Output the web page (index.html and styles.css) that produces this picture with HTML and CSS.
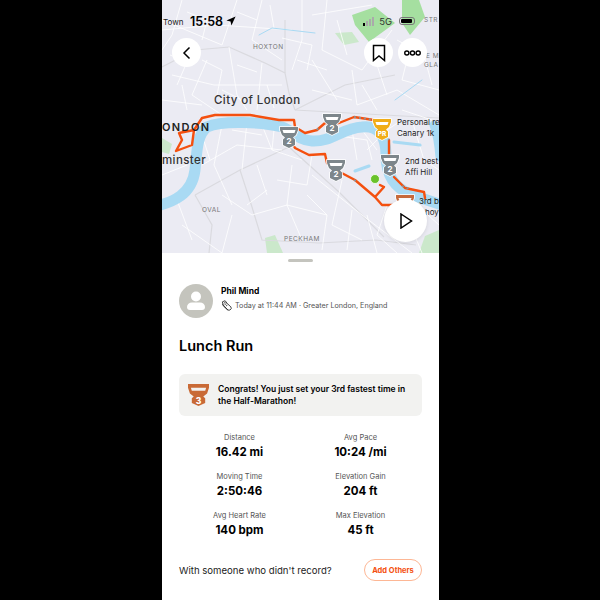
FILE: index.html
```html
<!DOCTYPE html>
<html lang="en">
  <head>
    <meta charset="UTF-8" />
    <meta name="viewport" content="width=device-width, initial-scale=1.0" />
    <title>Lunch Run</title>
    <link rel="stylesheet" href="styles.css">
  </head>
  <body>
    <div class="phone">
      <div class="map">
        <svg class="map-canvas" viewBox="0 0 277 253" width="277" height="253">
          <defs>
            <g id="medal">
              <path d="M0 0h18v3l-2 5-3 2.500 2 2v5.500L9 21l-6-3v-5.500l2-2L2 8 0 3z" fill="currentColor" stroke="#fff" stroke-width="1.500" paint-order="stroke" />
              <path d="M2.500 3h13l-1 3H3.500z" fill="#fff" />
            </g>
          </defs>

          <!-- parks -->
          <g class="park">
            <path d="M190 15 213 7l20 16-26 19-14-17z" />
            <path d="M240 0h17l6 17-15 18-8-12z" />
          </g>
          <g class="park-light">
            <path d="M173 33l17-1 7 10-15 3z" />
            <path d="M103 238l10-3 8 18h-16z" />
            <path d="M263 236l14-6v23h-20z" />
            <path d="M0 138l10 6-3 10-7-2z" />
          </g>

          <!-- grey main roads -->
          <g class="road-main">
            <path d="M0 67 33 50l34-3 36 16 20 10 4 20 6 17" />
            <path d="M133 110l50-25 50-10" />
            <path d="M33 195l45-25 49-23" />
            <path d="M78 170l12 37 10 33 57 3 57-3 40 5" />
            <path d="M33 195l17 30-3 28" />
            <path d="M127 147l50 45 45 45" />
            <path d="M123 73V20" />
            <path d="M133 110l144 8" />
          </g>

          <!-- white streets -->
          <g class="road">
            <path d="M0 20 60 45 75 0" />
            <path d="M20 0 10 35 0 50" />
            <path d="M100 0 90 40 120 60" />
            <path d="M140 0v40l-10 30" />
            <path d="M165 0l-5 50 40 20 30-40" />
            <path d="M190 70l5 35 40-15 42 25" />
            <path d="M45 60 30 95 60 115" />
            <path d="M67 47 75 95 85 110" />
            <path d="M10 75 52 85 120 85" />
            <path d="M0 100 40 105" />
            <path d="M100 63 95 110" />
            <path d="M150 60 175 100" />
            <path d="M210 50 225 95" />
            <path d="M250 40 240 80 277 90" />
            <path d="M0 30 55 25 130 30" />
            <path d="M150 15 210 5" />
            <path d="M60 125 52 165 70 205" />
            <path d="M85 122 80 170" />
            <path d="M100 125 110 150 140 160" />
            <path d="M40 165 75 145 120 150" />
            <path d="M60 195 90 215 125 205 165 215" />
            <path d="M130 165 125 205 140 240" />
            <path d="M180 180 170 225 200 240" />
            <path d="M205 215 215 253" />
            <path d="M150 175 200 215 250 253" />
            <path d="M20 225 60 253" />
            <path d="M170 135 205 140 210 160" />
            <path d="M190 130 195 160" />
            <path d="M240 205 260 253" />
            <path d="M25 12 45 20 40 40M75 12 95 20M108 5 112 28M120 38 150 45 145 70" />
            <path d="M8 55 25 62 15 85M40 60 60 70 55 95M75 65 95 72M105 85 112 108M135 60 165 70M175 20 185 55" />
            <path d="M20 85 25 110M60 90 80 100M200 85 215 110M235 40 262 55 270 85M150 90 190 100" />
            <path d="M40 135 48 160M70 130 100 135M112 130 110 150M150 155 145 185 115 180M95 165 105 195" />
            <path d="M205 150 225 130 240 120M200 130 215 150M250 120 262 160 277 170M240 110 270 120" />
            <path d="M0 175 25 165M15 200 30 240M70 215 60 253M105 190 85 205M145 195 165 215 160 250M190 210 185 250" />
            <path d="M225 205 215 235 235 253M255 205 277 225" />
          </g>

          <!-- river and docks -->
          <g class="water">
            <path class="river" d="M-5 206C10 202 30 195 33 170 35 150 35 135 45 127 60 120 100 122 120 127 130 130 135 140 150 141 170 142 180 128 200 127 215 125 224 135 224 155 224 175 232 188 250 195L280 205" />
            <path class="dock" d="M272 125c3 8 5 20 6 32" />
            <path class="canal" d="M97 35l13-7 43 5" />
            <path class="canal" d="M260 80l-27 20" />
            <path class="canal canal-wide" d="M232 142l26 3" />
            <path class="canal canal-wide" d="M193 171l14-5" />
          </g>

          <!-- route -->
          <g class="route">
            <path d="M14 151 20 140 17 133 32 130 30 145zM32 130 40 118 53 115 88 115 117 120 132 120 133 127 143 133 155 130 163 123 177 123 192 117 212 120" />
            <path d="M227 140V160M232 177 243 188 262 192 263 198" />
            <path d="M127 137 133 148 147 155 163 154 165 163 174 170 193 180 213 197 220 205 232 205M213 197 222 187 218 185" />
          </g>
          <g class="route-paused">
            <path d="M192 117 212 120M222 130 227 140M240 186 247 189M155 130 157 127M192 180 194 181" />
          </g>
          <circle class="start-dot" cx="213" cy="179" r="4.500" />

          <!-- medals -->
          <g class="medal-grey">
            <use href="#medal" x="118" y="127" />
            <use href="#medal" x="161" y="114" />
            <use href="#medal" x="165" y="160" />
            <use href="#medal" x="219" y="155" />
          </g>
          <use class="medal-gold" href="#medal" x="211" y="119" />
          <use class="medal-bronze" href="#medal" x="234" y="195" />
          <g class="medal-num">
            <text x="127" y="144">2</text>
            <text x="170" y="131">2</text>
            <text x="174" y="177">2</text>
            <text x="228" y="172">2</text>
          </g>
          <text class="medal-pr" x="220" y="136">PR</text>

          <!-- labels -->
          <text class="label" x="1" y="25">Town</text>
          <text class="label-small" x="91" y="49">HOXTON</text>
          <text class="label-city" x="52" y="104">City of London</text>
          <text class="label-bold" x="0" y="131">ONDON</text>
          <text class="label-city" x="0" y="164">minster</text>
          <text class="label-small" x="40" y="212">OVAL</text>
          <text class="label-small" x="122" y="241">PECKHAM</text>
          <text class="label-small" x="262" y="22">STR</text>
          <text class="label-small" x="264" y="58">E M</text>
          <text class="label-small" x="262" y="67">GLA</text>
          <text class="label" x="235" y="125">Personal re</text>
          <text class="label" x="235" y="136">Canary 1k</text>
          <text class="label" x="243" y="164">2nd best</text>
          <text class="label" x="243" y="175">Affi Hill</text>
          <text class="label" x="257" y="204">3rd b</text>
          <text class="label" x="263" y="215">hoy</text>
        </svg>

        <div class="status-bar">
          <div class="status-left">
            <span class="clock">15:58</span>
            <svg viewBox="0 0 12 12" width="10" height="10"><path d="M11.500.5 .5 5.500 5.500 6.500 6.500 11.500z" /></svg>
          </div>
          <div class="status-right">
            <span class="bars"><i></i><i></i><i></i><i></i></span>
            <span class="network">5G</span>
            <span class="battery"><b></b></span>
          </div>
        </div>

        <button class="map-btn back-btn" type="button">
          <svg viewBox="0 0 16 16" width="16" height="16"><path d="M10.500 2.500 5 8l5.500 5.500" /></svg>
        </button>
        <div class="top-actions">
          <button class="map-btn" type="button">
            <svg viewBox="0 0 16 18" width="16" height="18"><path d="M2.500 1.500h11v15L8 12l-5.500 4.500z" /></svg>
          </button>
          <button class="map-btn" type="button">
            <svg viewBox="0 0 18 8" width="17" height="8"><circle cx="3" cy="4" r="2.200" /><circle cx="9" cy="4" r="2.200" /><circle cx="15" cy="4" r="2.200" /></svg>
          </button>
        </div>
        <button class="map-btn play-btn" type="button">
          <svg viewBox="0 0 14 16" width="14" height="16"><path d="M2 1 12.500 8 2 15z" /></svg>
        </button>
      </div>

      <div class="sheet">
        <div class="handle"></div>

        <div class="athlete">
          <div class="avatar">
            <svg viewBox="0 0 34 34" width="34" height="34">
              <circle cx="17" cy="12.500" r="5" />
              <path d="M8 23a5 4.500 0 0 1 5-4.500h8a5 4.500 0 0 1 5 4.500 3 3 0 0 1-3 3H11a3 3 0 0 1-3-3z" />
            </svg>
          </div>
          <div>
            <div class="athlete-name">Phil Mind</div>
            <div class="athlete-meta">
              <svg viewBox="0 0 12 12" width="11" height="11"><path d="M1.500 2 4.500.8 7 4l3.800 3.500.4 2-1.500 1.500H7.500L2.500 6.500z" /><path d="M3 3.500l2-1M4 5l2-1M5.500 6.500l1.500-1M1.500 4.500 7.500 11" /></svg>
              <span>Today at 11:44 AM · Greater London, England</span>
            </div>
          </div>
        </div>

        <h1 class="title">Lunch Run</h1>

        <div class="callout">
          <svg class="callout-medal" viewBox="0 0 22 23" width="21" height="22">
            <path d="M0 0h22v4l-2 6-4 3 2 2v5l-7 3-7-3v-5l2-2-4-3-2-6z" />
            <path class="cut" d="M3 4h16l-1 3H4z" />
            <text x="11" y="20.500">3</text>
          </svg>
          <p>Congrats! You just set your 3rd fastest time in the Half-Marathon!</p>
        </div>

        <div class="stats">
          <div class="stat"><span>Distance</span><strong>16.42 mi</strong></div>
          <div class="stat"><span>Avg Pace</span><strong>10:24 /mi</strong></div>
          <div class="stat"><span>Moving Time</span><strong>2:50:46</strong></div>
          <div class="stat"><span>Elevation Gain</span><strong>204 ft</strong></div>
          <div class="stat"><span>Avg Heart Rate</span><strong>140 bpm</strong></div>
          <div class="stat"><span>Max Elevation</span><strong>45 ft</strong></div>
        </div>

        <div class="others">
          <span>With someone who didn't record?</span>
          <button class="others-btn" type="button">Add Others</button>
        </div>
      </div>
    </div>
  </body>
</html>
```

FILE: styles.css
```css
* {
  margin: 0;
  padding: 0;
  box-sizing: border-box;
}

body {
  background: #000;
  font-family: "Inter", "Liberation Sans", sans-serif;
  color: #000;
}

.phone {
  width: 277px;
  height: 600px;
  margin-left: 162px;
  background: #fff;
  overflow: hidden;
}

/* Map Section */
.map {
  position: relative;
  height: 253px;
  background: #ebebf3;
}

.map-canvas {
  display: block;
}

.park path {
  fill: #a5dfa0;
}

.park-light path {
  fill: #cbe8cb;
}

.road-main path {
  fill: none;
  stroke: #dadadf;
  stroke-width: 1.200;
}

.road path {
  fill: none;
  stroke: #fff;
  stroke-width: 0.800;
}

.water path {
  fill: none;
  stroke: #a9daf3;
  stroke-linecap: round;
}

.water .river {
  stroke-width: 11;
}

.water .dock {
  stroke-width: 9;
}

.water .canal {
  stroke-width: 1;
}

.water .canal-wide {
  stroke-width: 3;
}

.route path {
  fill: none;
  stroke: #f4500f;
  stroke-width: 2.400;
  stroke-linejoin: round;
  stroke-linecap: round;
}

.route-paused path {
  fill: none;
  stroke: #8d9296;
  stroke-width: 1.800;
  stroke-dasharray: 2 3;
}

.start-dot {
  fill: #69c22a;
  stroke: #fff;
  stroke-width: 0.800;
}

.medal-grey {
  color: #7d868b;
}

.medal-gold {
  color: #f0ad18;
}

.medal-bronze {
  color: #c76a3b;
}

.medal-num text {
  fill: #fff;
  font-size: 8px;
  font-weight: 700;
  text-anchor: middle;
}

.medal-pr {
  fill: #fff;
  font-size: 6.500px;
  font-weight: 800;
  text-anchor: middle;
}

.label {
  fill: #222;
  font-size: 8px;
}

.label-small {
  fill: #777;
  font-size: 6.500px;
  letter-spacing: 0.5px;
}

.label-city {
  fill: #333;
  font-size: 11.500px;
  font-weight: 500;
  letter-spacing: 0.4px;
}

.label-bold {
  fill: #222;
  font-size: 11px;
  font-weight: 600;
  letter-spacing: 1.400px;
}

/* Status bar */
.status-bar {
  position: absolute;
  top: 14px;
  left: 28px;
  right: 24px;
  display: flex;
  justify-content: space-between;
  align-items: center;
  height: 14px;
}

.status-left {
  display: flex;
  align-items: center;
  gap: 3px;
}

.clock {
  font-size: 12.500px;
  font-weight: 600;
}

.status-right {
  display: flex;
  align-items: center;
  gap: 5px;
}

.bars {
  display: flex;
  align-items: flex-end;
  gap: 1px;
  height: 9px;
}

.bars i {
  display: block;
  width: 2px;
  background: #aaa;
}

.bars i:nth-child(1) {
  height: 3px;
  background: #000;
}

.bars i:nth-child(2) {
  height: 5px;
}

.bars i:nth-child(3) {
  height: 7px;
}

.bars i:nth-child(4) {
  height: 9px;
}

.network {
  font-size: 9.500px;
  color: #333;
}

.battery {
  display: block;
  width: 16px;
  height: 8px;
  padding: 1px;
  border: 1px solid #777;
  border-radius: 3px;
  margin-left: 2px;
}

.battery b {
  display: block;
  width: 11px;
  height: 100%;
  background: #000;
  border-radius: 1px;
}

/* Map buttons */
.map-btn {
  display: flex;
  justify-content: center;
  align-items: center;
  width: 29px;
  height: 29px;
  background: #fff;
  border: none;
  border-radius: 50%;
}

.map-btn svg {
  fill: none;
  stroke: #000;
  stroke-width: 1.500;
}

.back-btn {
  position: absolute;
  top: 38px;
  left: 10px;
}

.top-actions {
  position: absolute;
  top: 38px;
  right: 12px;
  display: flex;
  gap: 5px;
}

.play-btn {
  position: absolute;
  top: 199px;
  right: 12px;
  width: 43px;
  height: 43px;
  box-shadow: 0 1px 4px rgba(0, 0, 0, 0.1);
}

/* Bottom sheet */
.sheet {
  position: relative;
  height: 347px;
  padding: 0 17px;
  background: #fff;
  border-radius: 6px 6px 0 0;
}

.handle {
  width: 25px;
  height: 3px;
  margin: 0 auto;
  position: relative;
  top: 6px;
  background: #c4c4be;
  border-radius: 2px;
}

.athlete {
  display: flex;
  align-items: flex-start;
  gap: 8px;
  padding-top: 28px;
}

.avatar {
  width: 34px;
  height: 34px;
  background: #c4c4bd;
  border-radius: 50%;
}

.avatar svg {
  display: block;
  fill: #fff;
}

.athlete-name {
  margin-top: 1px;
  font-size: 8.500px;
  font-weight: 700;
  line-height: 12px;
}

.athlete-meta {
  display: flex;
  align-items: center;
  gap: 3px;
  margin-top: 3px;
  font-size: 7.200px;
  color: #555;
}

.athlete-meta svg {
  fill: none;
  stroke: #222;
  stroke-width: 0.900;
}

.title {
  margin-top: 19px;
  font-size: 14.500px;
  font-weight: 600;
  line-height: 18px;
}

.callout {
  display: flex;
  align-items: center;
  gap: 9px;
  height: 42px;
  margin-top: 19px;
  padding: 0 9px;
  background: #f2f2f0;
  border-radius: 6px;
}

.callout-medal {
  flex-shrink: 0;
  fill: #c96a36;
}

.callout-medal .cut {
  fill: #f2f2f0;
}

.callout-medal text {
  fill: #fff;
  font-size: 9px;
  font-weight: 800;
  text-anchor: middle;
}

.callout p {
  font-size: 8.500px;
  font-weight: 600;
  line-height: 12px;
}

.stats {
  display: grid;
  grid-template-columns: 121px 121px;
  row-gap: 11px;
  margin-top: 16px;
  text-align: center;
}

.stat span {
  display: block;
  font-size: 7.500px;
  line-height: 11px;
  color: #555;
}

.stat strong {
  display: block;
  margin-top: 1px;
  font-size: 11.500px;
  font-weight: 700;
  line-height: 16px;
}

.others {
  display: flex;
  justify-content: space-between;
  align-items: center;
  margin-top: 21px;
  font-size: 9.600px;
  color: #222;
}

.others-btn {
  width: 58px;
  height: 22px;
  background: #fff;
  border: 1px solid #fdb795;
  border-radius: 11px;
  font-family: inherit;
  font-size: 7.500px;
  font-weight: 700;
  color: #f4500f;
}
```
